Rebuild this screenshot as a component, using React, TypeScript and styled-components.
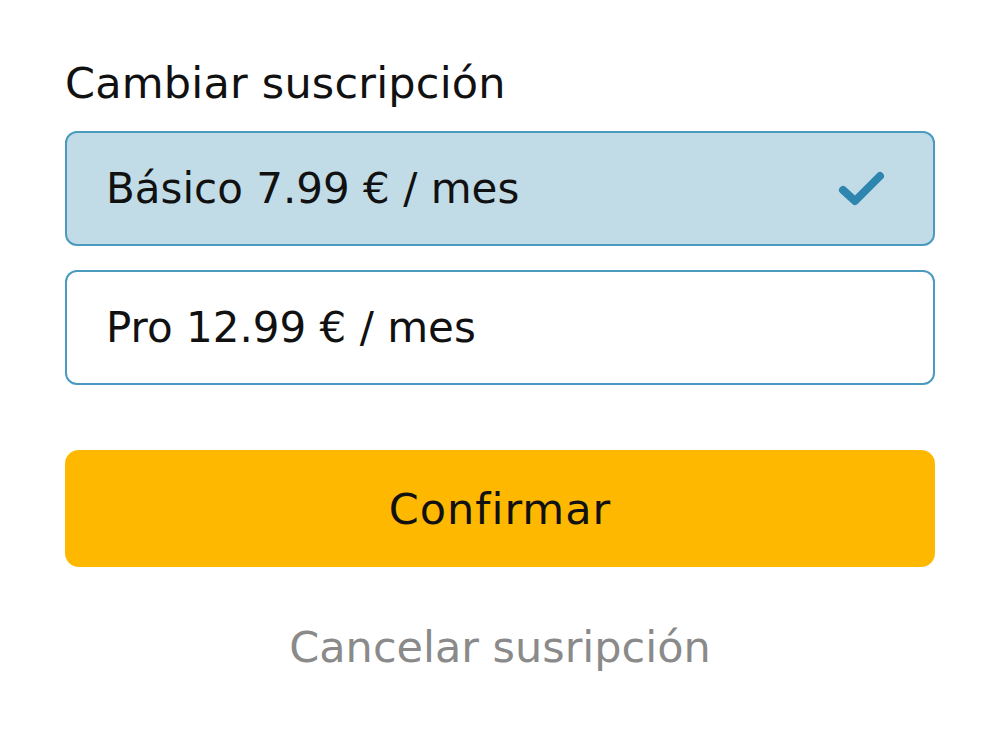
import styled, { createGlobalStyle } from 'styled-components';

const GlobalStyle = createGlobalStyle`
  body {
    margin: 0;
    background: #ffffff;
    font-family: "DejaVu Sans", "Noto Sans", sans-serif;
  }
`;

const Page = styled.div`
  width: 1000px;
  height: 730px;
  box-sizing: border-box;
  padding: 58px 65px 0 65px;
  display: flex;
  flex-direction: column;
`;

const Title = styled.h2`
  margin: 0 0 23px 0;
  font-size: 43px;
  font-weight: 400;
  color: #111111;
  line-height: 50px;
  letter-spacing: 0.2px;
`;

const Options = styled.div`
  display: flex;
  flex-direction: column;
  gap: 24px;
`;

const Option = styled.div<{ $selected?: boolean }>`
  height: 115px;
  box-sizing: border-box;
  border: 2px solid #4b9bc0;
  border-radius: 12px;
  background: ${(p) => (p.$selected ? '#c2dce7' : '#ffffff')};
  display: flex;
  align-items: center;
  justify-content: space-between;
  padding: 0 46px 0 39px;
  font-size: 42px;
  color: #111111;
`;

const Check = styled.svg`
  width: 50px;
  height: 40px;
`;

const ConfirmButton = styled.button`
  margin-top: 65px;
  height: 117px;
  border: none;
  border-radius: 14px;
  background: #ffb800;
  font-family: inherit;
  font-size: 43px;
  letter-spacing: 1px;
  color: #111111;
  cursor: pointer;
`;

const CancelLink = styled.div`
  margin-top: 55px;
  text-align: center;
  font-size: 43px;
  line-height: 50px;
  color: #8a8a8a;
`;

export default function App() {
  return (
    <>
      <GlobalStyle />
      <Page>
        <Title>Cambiar suscripción</Title>
        <Options>
          <Option $selected>
            <span>Básico 7.99 € / mes</span>
            <Check viewBox="0 0 50 40">
              <path
                d="M6 21 L18 32 L43 7"
                fill="none"
                stroke="#2e86ae"
                strokeWidth="8"
                strokeLinecap="round"
                strokeLinejoin="round"
              />
            </Check>
          </Option>
          <Option>
            <span>Pro 12.99 € / mes</span>
          </Option>
        </Options>
        <ConfirmButton>Confirmar</ConfirmButton>
        <CancelLink>Cancelar susripción</CancelLink>
      </Page>
    </>
  );
}
